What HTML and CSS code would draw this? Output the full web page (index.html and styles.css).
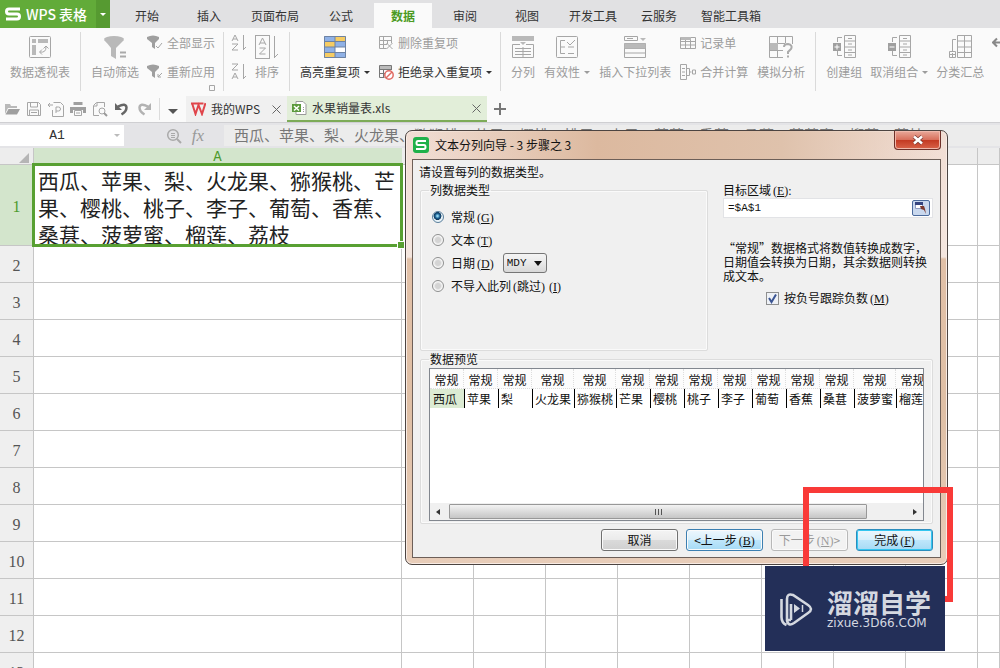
FILE: index.html
```html
<!DOCTYPE html>
<html lang="zh-CN">
<head>
<meta charset="utf-8">
<title>WPS 表格</title>
<link rel="stylesheet" href="styles.css">
</head>
<body>
<header class="topbar">
  <button class="brand"><svg width="16" height="14" viewBox="0 0 16 14"><path d="M15 2H4Q1.500 2 1.500 4.500T4 7H12Q14.500 7 14.500 9.500T12 12H1" fill="none" stroke="#fff" stroke-width="3"/></svg><span>WPS 表格</span></button>
  <button class="brand-more" aria-label="菜单"><i class="caret"></i></button>
  <nav class="tabs">
    <a href="#">开始</a><a href="#">插入</a><a href="#">页面布局</a><a href="#">公式</a><a href="#" class="active">数据</a><a href="#">审阅</a><a href="#">视图</a><a href="#">开发工具</a><a href="#">云服务</a><a href="#">智能工具箱</a>
  </nav>
</header>

<section class="ribbon">
  <div class="group">
    <button class="big"><svg width="24" height="24" viewBox="0 0 24 24"><rect x="1.500" y="1.500" width="21" height="21" rx="1" class="ln"/><path d="M4 4h4v4H4zM10 4h10v4H10zM4 10h4v10H4z" class="fl"/><path d="M12 17q6 1 6-5M15.500 13.500 18 11l2.500 2.500M14 14.500 11.500 17 14 19.500" class="ln"/></svg><span>数据透视表</span></button>
  </div>
  <div class="group filter">
    <button class="big"><svg width="24" height="24" viewBox="0 0 24 24"><ellipse cx="11" cy="4" rx="10" ry="3" class="fl"/><path d="M1 5q4 4 7 8v8l5 3V13q4-4 8-8z" class="fl"/><path d="M17 17.500h6M17 21.500h6" stroke="#aaa" stroke-width="2"/></svg><span>自动筛选</span></button>
    <div class="stack">
      <button class="small"><svg width="16" height="16" viewBox="0 0 16 16"><path d="M0 2q6-3 12 0v2L8 8v6L5 12V8L0 4z" class="fd"/><path d="m9 11 2 2 4-5" class="ln"/></svg>全部显示</button>
      <button class="small"><svg width="16" height="16" viewBox="0 0 16 16"><path d="M0 2q6-3 12 0v2L8 8v6L5 12V8L0 4z" class="fd"/><path d="m15 9-4 4M11 10v3h3" class="ln"/></svg>重新应用</button>
    </div>
    <svg class="launcher" width="6" height="6" viewBox="0 0 6 6"><path d="M5.500 2V.5H.5v5H2M2 5.500h3.500V2" class="ln"/></svg>
  </div>
  <div class="group sort">
    <div class="stack">
      <button class="small" aria-label="升序"><svg width="16" height="18" viewBox="0 0 16 18"><path d="m1 7 3-6 3 6M2 5h4M1 10h6l-6 6h6M12.500 1v14M12 16l3-3" class="ln"/></svg></button>
      <button class="small" aria-label="降序"><svg width="16" height="18" viewBox="0 0 16 18"><path d="M1 1h6L1 7h6M1 16l3-6 3 6M2 14h4M12.500 1v14M12 16l3-3" class="ln"/></svg></button>
    </div>
    <button class="big"><svg width="24" height="24" viewBox="0 0 24 24"><rect x=".5" y=".5" width="14" height="23" class="ln"/><path d="m4 10 3.500-7L11 10M5 8h5M4.500 13h6l-6 6h6M19.500 1v21M19 23l4-4" class="ln"/></svg><span>排序</span></button>
  </div>
  <div class="group repeat">
    <button class="big dark"><svg width="24" height="24" viewBox="0 0 24 24"><rect x="1" y="1" width="22" height="22" rx="1" fill="#fff"/><path d="M1 1h11v5H1zM12 6h11v6H12zM1 12h11v5H1zM12 17h11v6H12z" fill="#8fb1e6"/><path d="M12 1h11v5H12zM1 6h11v6H1zM1 17h11v6H1z" fill="#f6cc63"/><path d="M1.500 1.500h21v21h-21zM12 1v22M1 6.500h22M1 12h22M1 17.500h22" fill="none" stroke="#6e83a3"/></svg><span>高亮重复项<i class="caret"></i></span></button>
    <div class="stack">
      <button class="small"><svg width="16" height="16" viewBox="0 0 16 16"><path d="M13.500 8V1.500H1.500v12h7M1 5.500h12M5.500 2v11M1 9.500h8M9.500 5v4M8.500 8l6 6M14.500 8l-6 6" class="ln"/></svg>删除重复项</button>
      <button class="small dark"><svg width="16" height="16" viewBox="0 0 16 16"><path d="M13.500 6V1.500H1.500v12h5M1 5.500h12M5.500 2v11M1 9.500h6M9.500 2v4" fill="none" stroke="#777"/><path d="M2 2h11v3H2z" fill="#bbb"/><circle cx="11" cy="11" r="4.200" fill="#fff" stroke="#e06a62" stroke-width="1.500"/><path d="m8 14 6-6" stroke="#e06a62" stroke-width="1.500"/></svg>拒绝录入重复项<i class="caret"></i></button>
    </div>
  </div>
  <div class="group wide">
    <button class="big"><svg width="24" height="24" viewBox="0 0 24 24"><path d="M1 1h22v5H1zM9 7h6l-3 3z" class="fl"/><path d="M9 9.500H1.500v13h21v-13H15M4 13.500h16M4 16.500h16M4 19.500h16M12 12v10" class="ln"/></svg><span>分列</span></button>
    <button class="big"><svg width="24" height="24" viewBox="0 0 24 24"><rect x="1.500" y="1.500" width="21" height="21" rx="1" class="ln"/><path d="M10 5.500H5.500v13H10M6 12h4M13 12h6M13 18.500h6M12 7l3 3 5-5" class="ln"/></svg><span>有效性<i class="caret"></i></span></button>
    <button class="big"><svg width="24" height="24" viewBox="0 0 24 24"><path d="M1.500 5.500v-4h13v4zM4 3.500h6M1.500 8.500h21v14h-21zM1 13.500h22M1 18h22" class="ln"/><path d="M17 3h6l-3 3zM1.500 8.500h21v5h-21z" class="fl"/></svg><span>插入下拉列表</span></button>
    <div class="stack">
      <button class="small"><svg width="16" height="16" viewBox="0 0 16 16"><path d="M.5 2.500h15v11H.5zM0 6.500h16M0 10h16M5.500 2v11M10.500 2v11" class="ln"/><path d="M1 2h10v3H1z" class="fl"/></svg>记录单</button>
      <button class="small"><svg width="16" height="16" viewBox="0 0 16 16"><path d="M.5.5h6v15h-6zM2 4.500h3M2 8h3M2 11.500h3M7 4.500h2.500v7H7M9.500 8h2M12.500 6h3v4h-3z" class="ln"/></svg>合并计算</button>
    </div>
    <button class="big"><svg width="24" height="24" viewBox="0 0 24 24"><path d="M14 22.500H.5v-21h23V9M0 8.500h16M0 15.500h14M8.500 1v21M16.500 1v7" class="ln"/><path d="M1 8h8v7H1z" class="fl"/><path d="M15 12q0-3 4-3 5 1 3 5l-3 3v2M18 21.500h2" fill="none" stroke="#aaa" stroke-width="2"/></svg><span>模拟分析</span></button>
  </div>
  <div class="group outline">
    <button class="big"><svg width="24" height="24" viewBox="0 0 24 24"><path d="M12.500.5h11v22h-11zM13 6h10M13 12h10M13 17.500h10M16 3.500h4M16 9h4M16 15h4M16 20h4M10 2.500H5.500V7M5.500 16v4.500H10" class="ln"/><path d="M1 8h8v8H1z" class="fd"/><path d="M5 9.500v5M2.500 12h5" stroke="#fff"/></svg><span>创建组</span></button>
    <button class="big"><svg width="24" height="24" viewBox="0 0 24 24"><path d="M12.500.5h11v22h-11zM13 6h10M13 12h10M13 17.500h10M16 3.500h4M16 9h4M16 15h4M16 20h4M10 2.500H5.500V7M5.500 16v4.500H10" class="ln"/><path d="M1 8h8v8H1z" class="fd"/><path d="M2.500 12h5" stroke="#fff"/></svg><span>取消组合<i class="caret"></i></span></button>
    <button class="big"><svg width="24" height="24" viewBox="0 0 24 24"><path d="M9.500.5h14v22h-14zM10 6h14M10 12h14M10 17.500h14M16.500.5v22M8 4.500H4.500V16M1.500 16.500h6v6h-6zM4.500 18v4M2 19.500h5" class="ln"/></svg><span>分类汇总</span></button>
    <button class="big" aria-label="展开"><svg width="24" height="24" viewBox="0 0 24 24"><path d="M1 7.500h8M5 3.500 1 7.500l4 4" fill="none" stroke="#888" stroke-width="2"/></svg></button>
  </div>
</section>

<section class="quickbar">
  <div class="quick">
    <button aria-label="打开"><svg width="16" height="16" viewBox="0 0 16 16"><path d="M1 13V3h5l1 2h6v2H4z" class="fl"/><path d="M4.500 8H16l-3 5.500H1.500z" class="fd"/></svg></button>
    <button aria-label="保存"><svg width="16" height="16" viewBox="0 0 16 16"><path d="M1.500 1.500h11l2 2v11h-13zM4.500 2v4h7V2M3.500 14V9h9v5M5 11.500h6" class="ln"/></svg></button>
    <button aria-label="输出为PDF"><svg width="16" height="16" viewBox="0 0 16 16"><path d="M5.500 1.500h7l3 3v11h-11V9M8 12V6h2.500q2 0 2 2t-2 2H8M0 4h5M2 2 0 4l2 2" class="ln"/></svg></button>
    <button aria-label="打印"><svg width="16" height="16" viewBox="0 0 16 16"><path d="M3.500 1h9v3h-9zM0 6h16v6h-3V9H3v3H0z" class="fd"/><path d="M4.500 9.500h7v5h-7zM6 12h4" class="ln"/></svg></button>
    <button aria-label="打印预览"><svg width="16" height="16" viewBox="0 0 16 16"><path d="M12.500 6V1.500h-8l-3 3v10H7M2 5h3V2" class="ln"/><circle cx="10" cy="10" r="3" class="ln"/><path d="m12 12 3 3" stroke="#999" stroke-width="2"/></svg></button>
    <button aria-label="撤销"><svg width="16" height="16" viewBox="0 0 16 16"><path d="M4 5.500q8-4 8.500 1 0 4-5 7" fill="none" stroke="#666" stroke-width="2.500"/><path d="M1 2v7h7z" fill="#666"/></svg></button>
    <button aria-label="恢复"><svg width="16" height="16" viewBox="0 0 16 16"><path d="M12 5.500q-8-4-8.500 1 0 4 5 7" fill="none" stroke="#b2b2b2" stroke-width="2.500"/><path d="M15 2v7H8z" fill="#b2b2b2"/></svg></button>
  </div>
  <button class="quick-more" aria-label="更多"><i class="caret"></i></button>
  <div class="doc"><svg width="15" height="14" viewBox="0 0 15 14"><path d="M0 1.500h12.500M1 1l3.500 11L7.500 3l3.500 9L14.500 1" fill="none" stroke="#e0454b" stroke-width="2"/></svg><span>我的WPS</span><button aria-label="关闭"><svg width="9" height="9" viewBox="0 0 9 9"><path d="m.5.5 8 8m0-8-8 8" stroke="#666"/></svg></button></div>
  <div class="doc current"><svg width="15" height="14" viewBox="0 0 15 14"><path d="M4 .5h7l3 3v10H4z" fill="#fff" stroke="#999"/><path d="M0 3h9v8H0z" fill="#5b9a3c"/><path d="m2 5 5 4.500M7 5 2 9.500" stroke="#fff" stroke-width="1.500"/><path d="M11.500 6v6" stroke="#999" stroke-dasharray="1 1"/></svg><span>水果销量表.xls</span><button aria-label="关闭"><svg width="9" height="9" viewBox="0 0 9 9"><path d="m.5.5 8 8m0-8-8 8" stroke="#666"/></svg></button></div>
  <button class="add" aria-label="新建"><svg width="12" height="12" viewBox="0 0 12 12"><path d="M6 0v12M0 6h12" stroke="#777" stroke-width="2"/></svg></button>
</section>

<section class="formula">
  <div class="namebox"><input aria-label="名称框" value="A1"><i class="caret"></i></div>
  <div class="fx"><svg width="16" height="16" viewBox="0 0 16 16"><circle cx="7" cy="7" r="5.300" fill="none" stroke="#aaa" stroke-width="1.500"/><path d="m11 11 4 4" stroke="#aaa" stroke-width="2"/><path d="M5 5.500h4M5 7.500h4M5 9.500h4" stroke="#aaa"/></svg><em>fx</em></div>
  <div class="fvalue">西瓜、苹果、梨、火龙果、猕猴桃、芒果、樱桃、桃子、李子、葡萄、香蕉、桑葚、菠萝蜜、榴莲、荔枝</div>
</section>

<main class="sheet">
  <table class="grid">
    <colgroup><col class="c-head"><col class="c-a"><col class="c"><col class="c"><col class="c"><col class="c"><col class="c"><col class="c"><col class="c"><col class="c"><col></colgroup>
    <thead><tr><th class="corner"><svg width="10" height="10" viewBox="0 0 10 10"><path d="M10 0v10H0z" fill="#b5b5b5"/></svg></th><th class="sel">A</th><th></th><th></th><th></th><th></th><th></th><th></th><th></th><th></th><th></th></tr></thead>
    <tbody>
      <tr class="first"><th class="sel">1</th><td class="cell-a1"><div class="wrap">西瓜、苹果、梨、火龙果、猕猴桃、芒果、樱桃、桃子、李子、葡萄、香蕉、桑葚、菠萝蜜、榴莲、荔枝</div></td><td></td><td></td><td></td><td></td><td></td><td></td><td></td><td></td><td></td></tr>
      <tr><th>2</th><td></td><td></td><td></td><td></td><td></td><td></td><td></td><td></td><td></td><td></td></tr>
      <tr><th>3</th><td></td><td></td><td></td><td></td><td></td><td></td><td></td><td></td><td></td><td></td></tr>
      <tr><th>4</th><td></td><td></td><td></td><td></td><td></td><td></td><td></td><td></td><td></td><td></td></tr>
      <tr><th>5</th><td></td><td></td><td></td><td></td><td></td><td></td><td></td><td></td><td></td><td></td></tr>
      <tr><th>6</th><td></td><td></td><td></td><td></td><td></td><td></td><td></td><td></td><td></td><td></td></tr>
      <tr><th>7</th><td></td><td></td><td></td><td></td><td></td><td></td><td></td><td></td><td></td><td></td></tr>
      <tr><th>8</th><td></td><td></td><td></td><td></td><td></td><td></td><td></td><td></td><td></td><td></td></tr>
      <tr><th>9</th><td></td><td></td><td></td><td></td><td></td><td></td><td></td><td></td><td></td><td></td></tr>
      <tr><th>10</th><td></td><td></td><td></td><td></td><td></td><td></td><td></td><td></td><td></td><td></td></tr>
      <tr><th>11</th><td></td><td></td><td></td><td></td><td></td><td></td><td></td><td></td><td></td><td></td></tr>
      <tr><th>12</th><td></td><td></td><td></td><td></td><td></td><td></td><td></td><td></td><td></td><td></td></tr>
      <tr><th>13</th><td></td><td></td><td></td><td></td><td></td><td></td><td></td><td></td><td></td><td></td></tr>
    </tbody>
  </table>
</main>

<div class="dialog" role="dialog" aria-labelledby="dlg-title">
  <div class="titlebar">
    <svg width="16" height="16" viewBox="0 0 16 16"><rect width="16" height="16" rx="3" fill="#20b14a"/><path d="M13 4H5Q3.500 4 3.500 6T5 8h6q1.500 0 1.500 2T11 12H3" fill="none" stroke="#fff" stroke-width="2"/></svg>
    <span id="dlg-title">文本分列向导 - 3 步骤之 3</span>
    <button class="close" aria-label="关闭"><svg width="12" height="10" viewBox="0 0 12 10"><path d="m2 1.500 8 7m0-7-8 7" stroke="#7a3a34" stroke-width="4"/><path d="m2 1.500 8 7m0-7-8 7" stroke="#fff" stroke-width="2.500"/></svg></button>
  </div>
  <form class="client">
    <p class="lead">请设置每列的数据类型。</p>
    <div class="upper">
      <fieldset class="types">
        <legend>列数据类型</legend>
        <div class="row"><input type="radio" name="t" id="t1" checked><label for="t1">常规<kbd>(<u>G</u>)</kbd></label></div>
        <div class="row"><input type="radio" name="t" id="t2"><label for="t2">文本<kbd>(<u>T</u>)</kbd></label></div>
        <div class="row"><input type="radio" name="t" id="t3"><label for="t3">日期<kbd>(<u>D</u>)</kbd></label><span class="pick"><select aria-label="日期格式"><option>MDY</option></select><i class="caret"></i></span></div>
        <div class="row"><input type="radio" name="t" id="t4"><label for="t4">不导入此列<kbd>(</kbd>跳过<kbd class="end">)</kbd><kbd>(<u>I</u>)</kbd></label></div>
      </fieldset>
      <div class="target">
        <label class="cap" for="dest">目标区域<kbd>(<u>E</u>):</kbd></label>
        <div class="ref"><input id="dest" value="=$A$1"><button type="button" aria-label="选择区域"><svg width="14" height="12" viewBox="0 0 14 12"><path d="M1.500.5h7v6h-7z" fill="#fff" stroke="#8d9ac0"/><path d="M1 0h8v3H1z" fill="#35447f"/><path d="M6 4h4l1 3 1 5-2-4-3-1z" fill="#7c3a30"/></svg></button></div>
        <p>“常规”数据格式将数值转换成数字，日期值会转换为日期，其余数据则转换成文本。</p>
        <div class="neg"><input type="checkbox" id="neg" checked><label for="neg">按负号跟踪负数<kbd>(<u>M</u>)</kbd></label></div>
      </div>
    </div>
    <fieldset class="preview">
      <legend>数据预览</legend>
      <div class="box">
        <div class="view">
          <table>
            <thead><tr><th>常规</th><th>常规</th><th>常规</th><th class="w">常规</th><th class="w">常规</th><th>常规</th><th>常规</th><th>常规</th><th>常规</th><th>常规</th><th>常规</th><th>常规</th><th class="w">常规</th><th>常规</th></tr></thead>
            <tbody><tr><td class="on">西瓜</td><td>苹果</td><td>梨</td><td>火龙果</td><td>猕猴桃</td><td>芒果</td><td>樱桃</td><td>桃子</td><td>李子</td><td>葡萄</td><td>香蕉</td><td>桑葚</td><td>菠萝蜜</td><td>榴莲</td></tr></tbody>
          </table>
        </div>
        <div class="scroll"><i class="arrow left"></i><div class="track"><div class="thumb"><i></i><i></i><i></i></div></div><i class="arrow right"></i></div>
      </div>
    </fieldset>
    <div class="actions">
      <button type="button">取消</button>
      <button type="button" class="blue">&lt;上一步<kbd>(<u>B</u>)</kbd></button>
      <button type="button" disabled>下一步<kbd>(<u>N</u>)</kbd>&gt;</button>
      <button type="button" class="blue main">完成<kbd>(<u>F</u>)</kbd></button>
    </div>
  </form>
</div>

<div class="highlight"></div>
<div class="watermark">
  <svg width="34" height="36" viewBox="0 0 34 36"><path d="M1.500 8v18q0 6 5 8M11 29V13M11 29H7V8q0-6 6-4l15 10q6 4 0 8L14 32q-6 4-7-3" fill="none" stroke="#d4d8e0" stroke-width="2.600"/><path d="m14 13 6 4.500-6 4.500z" fill="#d4d8e0"/><path d="M22.500 14v7" stroke="#d4d8e0" stroke-width="1.500"/></svg>
  <div><strong>溜溜自学</strong><span>zixue.3D66.COM</span></div>
</div>
</body>
</html>
```

FILE: styles.css
```css
* { box-sizing: border-box; }
body {
  margin: 0;
  height: 100vh;
  overflow: hidden;
  position: relative;
  display: flex;
  flex-direction: column;
  background: #fff;
  color: #333;
  font: 12px/16px "Noto Sans CJK SC", sans-serif;
}
button { margin: 0; padding: 0; border: 0; background: none; color: inherit; font: inherit; }
input, select { margin: 0; font: inherit; color: inherit; }
svg { display: block; flex: none; }
p { margin: 0; }
.caret { display: inline-block; border: 3px solid transparent; border-top-color: currentColor; border-bottom: 0; }
.ln { fill: none; stroke: #a6a6a6; }
.fl { fill: #b9b9b9; }
.fd { fill: #9f9f9f; }

.topbar { display: flex; flex: none; height: 28px; background: #e1e1e3; }
.brand { display: flex; align-items: center; gap: 5px; width: 96px; padding-left: 5px; background: #62ab39; color: #fff; font-size: 14px; font-weight: 500; white-space: nowrap; }
.brand-more { width: 14px; background: #569a31; color: #fff; display: flex; align-items: center; justify-content: center; }
.tabs { display: flex; gap: 4px; align-items: flex-end; padding-left: 8px; }
.tabs a { min-width: 58px; height: 25px; padding: 0 9px; line-height: 25px; text-align: center; color: #333; text-decoration: none; white-space: nowrap; }
.tabs .active { background: #fafafa; color: #4c9a22; font-weight: 700; }

.ribbon { display: flex; flex: none; height: 67px; padding-top: 4px; background: #fafafa; overflow: hidden; }
.group { position: relative; display: flex; flex: none; gap: 8px; height: 59px; padding: 0 10px; border-right: 1px solid #dadada; color: #9c9c9c; }
.group.filter { padding-right: 8px; }
.group.sort { padding-left: 7px; }
.group.repeat { padding-right: 8px; }
.group.wide { gap: 9px; }
.group.outline { gap: 8px; border: 0; }
.big { display: flex; flex-direction: column; align-items: center; gap: 5px; padding-top: 3px; white-space: nowrap; align-self: flex-start; }
.big span { display: flex; align-items: center; gap: 4px; }
.stack { display: flex; flex-direction: column; gap: 11px; padding-top: 2px; }
.small { display: flex; align-items: center; gap: 4px; height: 18px; white-space: nowrap; }
.dark { color: #333; }
.launcher { position: absolute; right: 8px; bottom: 0; }

.quickbar { display: flex; flex: none; height: 28px; padding-top: 1px; background: #fafafa; border-bottom: 1px solid #cfcfd2; }
.quick { display: flex; align-items: center; gap: 6px; padding: 0 7px 0 4px; }
.quick-more { width: 27px; margin-top: 2px; height: 22px; border-left: 1px solid #dcdcdc; color: #555; }
.quick-more .caret { border-width: 5px 5px 0; }
.doc { display: flex; align-items: center; gap: 5px; width: 101px; padding: 0 6px 0 5px; background: #f0f0f0; white-space: nowrap; }
.doc button { margin-left: auto; }
.doc.current { width: 200px; background: #e2eed9; border-bottom: 2px solid #7dab58; }
.add { padding: 0 7px; }

.formula { display: flex; flex: none; height: 25px; padding: 2px 0; background: #e4e4e7; }
.namebox { display: flex; align-items: center; width: 124px; padding-right: 4px; background: #fff; color: #bbb; }
.namebox input { flex: 1; min-width: 0; border: 0; padding: 0; text-align: center; color: #333; font: 13px "Liberation Mono", monospace; }
.fx { display: flex; align-items: center; justify-content: flex-end; gap: 10px; width: 100px; padding-right: 20px; color: #999; }
.fx em { font: italic 17px "Liberation Serif", serif; }
.fvalue { flex: 1; min-width: 0; padding-left: 10px; overflow: hidden; background: #ececec; color: #777; font-size: 15px; line-height: 20px; white-space: nowrap; }

.sheet { flex: 1; min-height: 0; overflow: hidden; }
.grid { width: 100%; table-layout: fixed; border-collapse: separate; border-spacing: 0; }
.c-head { width: 34px; }
.c-a { width: 368px; }
.c { width: 72px; }
.grid th, .grid td { padding: 0; border-right: 1px solid #c6c6c6; border-bottom: 1px solid #c6c6c6; }
.grid thead th { height: 17px; padding-top: 3px; background: #ededed; font: 14px/13px "Liberation Mono", monospace; }
.grid thead .corner svg { margin: 0 4px 0 auto; }
.grid tbody th { height: 37px; padding-top: 4px; background: #efefef; color: #555; font: 16px "Liberation Serif", serif; }
.grid .sel { background: #d3e5cc; color: #4e9a2c; }
.grid thead .sel { border-color: #d3e5cc; }
.grid .first th, .grid .first td { height: 81px; }
.grid .cell-a1 { position: relative; padding: 2px 0 0 4px; color: #222; font-size: 21px; line-height: 27px; vertical-align: top; }
.wrap { height: 78px; }
.cell-a1::before { content: ""; position: absolute; inset: -2px; border: 3px solid #58a032; }
.cell-a1::after { content: ""; position: absolute; right: -4px; bottom: -4px; width: 6px; height: 6px; background: #58a032; border: 1px solid #fff; }

.dialog { position: absolute; left: 405px; top: 130px; width: 543px; padding: 0 6px 6px; border: 1px solid #4c4441; border-radius: 7px; background: linear-gradient(#f1ddd3 0, #f4e6df 126px, #e1c0a7 128px, #dfbfa5 280px, #e8cdb9); box-shadow: inset 0 0 0 1px #f8ebe4; color: #111; }
.titlebar { display: flex; align-items: center; gap: 6px; height: 28px; padding-left: 1px; background: linear-gradient(90deg, #f3e0d700, #dcb99f 35%, #dfc2ac 70%, #edd8cb00); }
.close { align-self: flex-start; display: flex; align-items: center; justify-content: center; width: 47px; height: 19px; margin-left: auto; border: 1px solid #6e3029; border-top: 0; border-radius: 0 0 4px 4px; background: linear-gradient(#e9aa9b, #d8705c 48%, #c33a23 52%, #d9634a); box-shadow: inset 0 0 0 1px #f0b8aa; }
.client { padding: 5px 7px 6px 6px; border: 1px solid #6d5f58; background: #f0f0f0; line-height: 14px; }
kbd { margin-left: 2px; font: 12px/12px "Liberation Serif", serif; }
kbd.end { margin: 0 2px 0 0; }
fieldset { margin: 0; min-width: 0; border: 1px solid #dcdcdc; box-shadow: inset 0 0 0 1px #fafafa; border-radius: 2px; }
legend { padding: 0 1px; margin: 0; }
.upper { display: flex; gap: 15px; margin: 4px 0 0 1px; }
.types { width: 288px; height: 168px; padding: 8px; }
.row { display: flex; align-items: center; gap: 7px; height: 23px; padding-left: 2px; }
input[type="radio"] { appearance: none; width: 12px; height: 12px; margin-left: 1px; border: 1px solid #8e8f8f; border-radius: 50%; background: radial-gradient(#d4d4d4 35%, #f6f6f6 60%); }
input[type="radio"]:checked { border-color: #5a7f9c; background: radial-gradient(circle at 45% 40%, #8fd3ee 8%, #1a5f92 28%, #12385a 45%, #e8f2f8 52%); }
.pick { position: relative; margin-left: 2px; }
.pick select { display: block; appearance: none; width: 44px; height: 20px; padding: 0 3px; border: 1px solid #767676; border-radius: 3px; background: linear-gradient(#f4f4f4, #e9e9e9 50%, #d8d8d8); font: 11px "Liberation Mono", monospace; }
.pick .caret { position: absolute; right: 5px; top: 8px; border-width: 5px 4px 0; pointer-events: none; }
.target { flex: 1; min-width: 0; }
.cap { display: block; height: 14px; }
.ref { display: flex; align-items: center; height: 20px; margin-top: 1px; padding-right: 2px; background: #fff; border: 1px solid #e2e3e6; }
.ref input { flex: 1; min-width: 0; border: 0; padding: 0 4px; background: none; font: 11px "Liberation Mono", monospace; }
.ref button { display: flex; align-items: center; justify-content: center; width: 18px; height: 16px; border: 1px solid #4b6a9c; border-radius: 2px; background: #c9d8ee; }
.target p { margin-top: 23px; }
.neg { display: flex; align-items: center; gap: 5px; margin-top: 8px; padding-left: 43px; }
input[type="checkbox"] { appearance: none; width: 13px; height: 13px; border: 1px solid #8e8f8f; background: #eef1f6 url("data:image/svg+xml,%3Csvg xmlns='http://www.w3.org/2000/svg' viewBox='0 0 11 11'%3E%3Cpath d='m2 5 2.500 4L9 1.500' fill='none' stroke='%233b5593' stroke-width='2'/%3E%3C/svg%3E"); }
.preview { margin: 1px 0 0 1px; padding: 2px 8px; }
.box { display: flex; flex-direction: column; height: 153px; border: 1px solid #82878f; background: #fff; }
.view { flex: 1; min-height: 0; overflow: hidden; }
.view table { width: 500px; table-layout: fixed; border-collapse: separate; border-spacing: 0; }
.view th { width: 34px; height: 20px; padding: 2px 0 0; border-bottom: 1px dotted #ddd; border-right: 1px dotted #ddd; font-weight: 400; background: #fcfcfc; white-space: nowrap; }
.view .w { width: 42px; }
.view td { height: 19px; padding: 0 0 0 2px; border-left: 1px solid #000; white-space: nowrap; }
.view td.on { padding-left: 3px; border-left: 0; background: #dcebd3; }
.scroll { display: flex; align-items: center; height: 17px; padding: 0 6px; background: #f0f0f0; }
.arrow { border: 3px solid transparent; }
.arrow.left { border-right: 4px solid #333; border-left: 0; }
.arrow.right { border-left: 4px solid #333; border-right: 0; }
.track { flex: 1; padding: 0 46px 0 9px; }
.thumb { display: flex; gap: 2px; align-items: center; justify-content: center; height: 15px; border: 1px solid #989898; border-radius: 1px; background: linear-gradient(#f3f3f3, #dedede 45%, #c6c6c6); }
.thumb i { width: 1px; height: 6px; background: #555; }
.actions { display: flex; justify-content: flex-end; gap: 8px; margin-top: 5px; }
.actions button { width: 77px; height: 22px; border: 1px solid #707070; border-radius: 3px; background: linear-gradient(#f4f4f4, #ebebeb 48%, #dadada 52%, #d0d0d0); box-shadow: inset 0 0 0 1px #fafafa; white-space: nowrap; }
.actions .blue { border-color: #3c7fb1; background: linear-gradient(#edf7fd, #d8effb 48%, #bee6fb 52%, #a5daf5); }
.actions .main { border-color: #2c8dbd; box-shadow: inset 0 0 0 1px #35c6f0; }
.actions button:disabled { border-color: #b8b8b8; background: #f2f2f2; color: #9a9a9a; }

.highlight { position: absolute; left: 803px; top: 487px; width: 150px; height: 115px; border: 6px solid #f93a38; }
.watermark { position: absolute; left: 765px; top: 566px; display: flex; align-items: center; gap: 13px; width: 180px; height: 85px; padding-left: 15px; background: #232f58; color: #d4d8e0; }
.watermark div { display: flex; flex-direction: column; }
.watermark strong { font-size: 26px; line-height: 28px; font-weight: 700; }
.watermark span { font: 12px/14px "DejaVu Sans", sans-serif; }
```
